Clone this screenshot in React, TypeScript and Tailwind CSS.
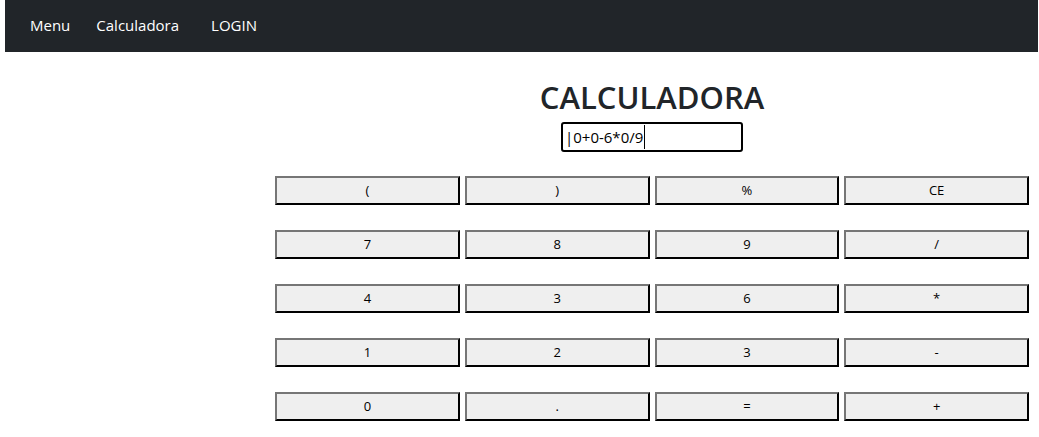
import React from "react";

const rows = [
  ["(", ")", "%", "CE"],
  ["7", "8", "9", "/"],
  ["4", "3", "6", "*"],
  ["1", "2", "3", "-"],
  ["0", ".", "=", "+"],
];

export default function App() {
  return (
    <div className="min-h-[437px] bg-white" style={{ fontFamily: "'Open Sans', 'Noto Sans', sans-serif" }}>
      <nav className="ml-[5px] mr-[1px] h-[52px] bg-[#212529] flex items-center pb-[2px] text-[15px] text-white">
        <span className="ml-[25px]">Menu</span>
        <span className="ml-[26px]">Calculadora</span>
        <span className="ml-[32px]">LOGIN</span>
      </nav>
      <div className="ml-[275px] w-[754px] flex flex-col items-center">
        <h1 className="mt-[25px] text-[31px] leading-[40px] font-semibold text-[#212529]">CALCULADORA</h1>
        <div className="mt-[5px] w-[182px] h-[30px] border-2 border-black rounded-[3px] flex items-center pl-[2px] text-[15px] text-black">
          <span>|0+0-6*0/9</span>
          <span className="w-[1px] h-[24px] bg-black ml-[1px]" />
        </div>
        <div className="mt-[24px] w-full grid grid-cols-4 gap-x-[5px] gap-y-[25px]">
          {rows.flat().map((k, i) => (
            <button
              key={i}
              className="h-[29px] bg-[#efefef] border-2 border-t-[#767676] border-l-[#767676] border-r-black border-b-black text-[13px] text-black flex items-center justify-center"
            >
              {k}
            </button>
          ))}
        </div>
      </div>
    </div>
  );
}
